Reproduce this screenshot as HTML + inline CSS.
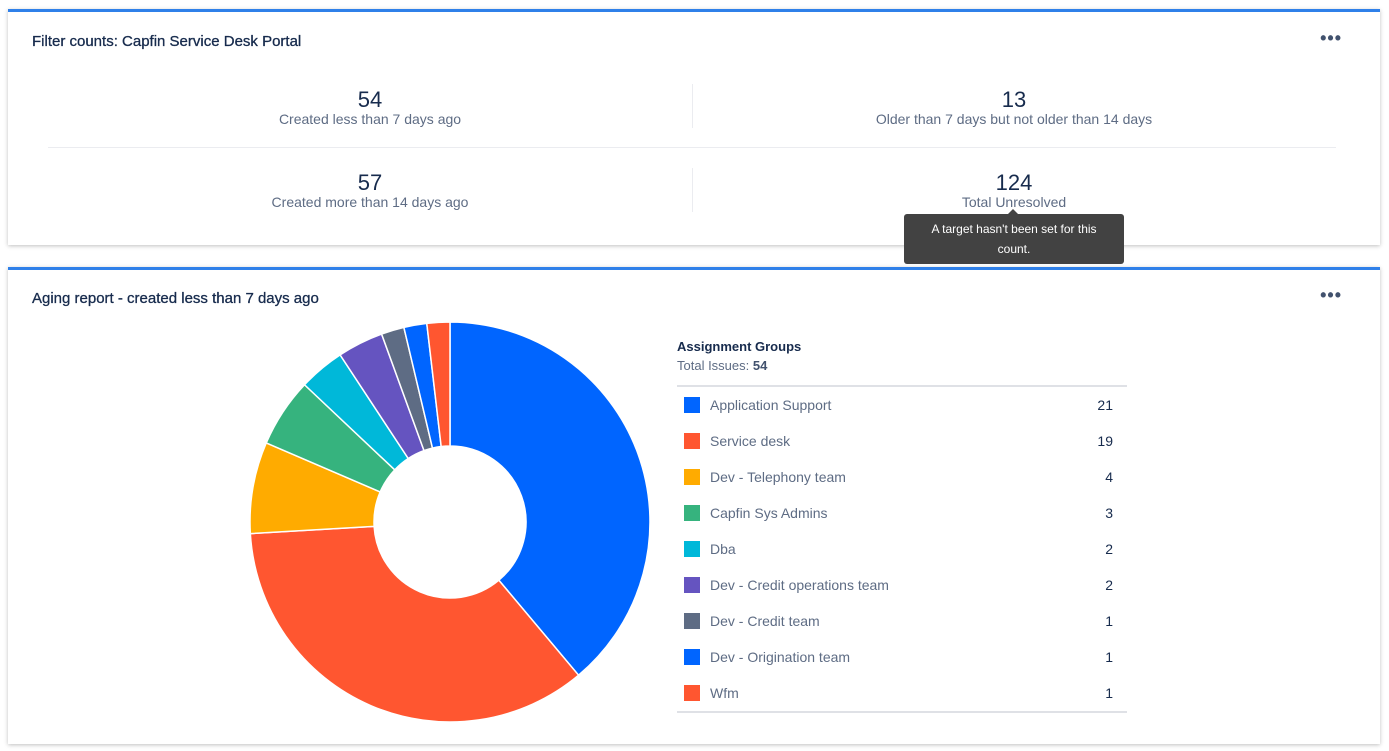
<!DOCTYPE html>
<html><head><meta charset="utf-8"><style>
body{margin:0;background:#fff;font-family:"Liberation Sans",Arial,sans-serif;width:1389px;height:751px;overflow:hidden;position:relative}
.card{position:absolute;left:8px;width:1372px;background:#fff;border-top:3px solid #2f80e9;box-shadow:0 1px 4px rgba(0,0,0,.25)}
.title{position:absolute;left:24px;font-size:15px;color:#172b4d;-webkit-text-stroke:0.3px #172b4d}
.dots{position:absolute;right:38px;font-size:18px;color:#42526e;font-weight:bold;letter-spacing:1px}
.stat{position:absolute;width:644px;text-align:center;color:#172b4d}
.stat .n{font-size:22px;line-height:22px}
.stat .l{font-size:14px;color:#5e6c84;line-height:16px}
.vl{position:absolute;left:684px;width:1px;background:#ebecf0}
.tip{position:absolute;left:904px;top:214px;width:220px;height:50px;background:#424242;color:#fff;border-radius:3px;font-size:12px;text-align:center;line-height:20px;padding-top:5px;box-sizing:border-box;z-index:2}
.tip:before{content:"";position:absolute;left:104px;top:-5px;border:5px solid transparent;border-top:0;border-bottom-color:#424242}
.row{position:absolute;left:677px;width:436px;height:36px;font-size:14px;color:#5e6c84}
.row i{position:absolute;left:7px;top:9px;width:16px;height:16px}
.row span{position:absolute;left:33px;top:9px}
.row b{position:absolute;right:0;top:9px;font-weight:normal;color:#172b4d}
</style></head><body>
<div class="card" style="top:9px;height:233px">
<div class="title" style="top:21px">Filter counts: Capfin Service Desk Portal</div>
<div class="dots" style="top:16px">•••</div>
<div class="stat" style="left:40px;top:77px"><div class="n">54</div><div class="l">Created less than 7 days ago</div></div>
<div class="stat" style="left:684px;top:77px"><div class="n">13</div><div class="l">Older than 7 days but not older than 14 days</div></div>
<div class="stat" style="left:40px;top:160px"><div class="n">57</div><div class="l">Created more than 14 days ago</div></div>
<div class="stat" style="left:684px;top:160px"><div class="n">124</div><div class="l">Total Unresolved</div></div>
<div class="vl" style="top:72px;height:44px"></div>
<div class="vl" style="top:156px;height:44px"></div>
<div style="position:absolute;left:40px;top:135px;width:1288px;height:1px;background:#ebecf0"></div>
</div>
<div class="tip">A target hasn't been set for this<br>count.</div>
<div class="card" style="top:267px;height:474px">
<div class="title" style="top:20px">Aging report - created less than 7 days ago</div>
<div class="dots" style="top:15px">•••</div>
</div>
<svg style="position:absolute;left:0;top:0" width="1389" height="751">
<g stroke="#fff" stroke-width="1.5" stroke-linejoin="round">
<path fill="#0065ff" d="M450,322 A200,200 0 0 1 578.56,675.2 L498.85,580.22 A76,76 0 0 0 450,446 Z"/>
<path fill="#ff5630" d="M578.56,675.2 A200,200 0 0 1 250.34,533.63 L374.13,526.42 A76,76 0 0 0 498.85,580.22 Z"/>
<path fill="#ffab00" d="M250.34,533.63 A200,200 0 0 1 266.29,442.89 L380.19,491.94 A76,76 0 0 0 374.13,526.42 Z"/>
<path fill="#36b37e" d="M266.29,442.89 A200,200 0 0 1 304.53,384.75 L394.72,469.85 A76,76 0 0 0 380.19,491.94 Z"/>
<path fill="#00b8d9" d="M304.53,384.75 A200,200 0 0 1 340.10,354.90 L408.24,458.50 A76,76 0 0 0 394.72,469.85 Z"/>
<path fill="#6554c0" d="M340.10,354.90 A200,200 0 0 1 381.60,334.06 L424.01,450.58 A76,76 0 0 0 408.24,458.50 Z"/>
<path fill="#5e6c84" d="M381.60,334.06 A200,200 0 0 1 403.88,327.39 L432.47,448.05 A76,76 0 0 0 424.01,450.58 Z"/>
<path fill="#0065ff" d="M403.88,327.39 A200,200 0 0 1 426.76,323.35 L441.17,446.51 A76,76 0 0 0 432.47,448.05 Z"/>
<path fill="#ff5630" d="M426.76,323.35 A200,200 0 0 1 450,322 L450,446 A76,76 0 0 0 441.17,446.51 Z"/>
</g>
</svg>
<div style="position:absolute;left:677px;top:339px;font-size:13px;color:#172b4d;font-weight:bold">Assignment Groups</div>
<div style="position:absolute;left:677px;top:358px;font-size:13px;color:#5e6c84">Total Issues: <b style="color:#42526e">54</b></div>
<div style="position:absolute;left:677px;top:385px;width:450px;height:2px;background:#dfe1e6"></div>
<div style="position:absolute;left:677px;top:711px;width:450px;height:2px;background:#dfe1e6"></div>
<div class="row" style="top:388px"><i style="background:#0065ff"></i><span>Application Support</span><b>21</b></div>
<div class="row" style="top:424px"><i style="background:#ff5630"></i><span>Service desk</span><b>19</b></div>
<div class="row" style="top:460px"><i style="background:#ffab00"></i><span>Dev - Telephony team</span><b>4</b></div>
<div class="row" style="top:496px"><i style="background:#36b37e"></i><span>Capfin Sys Admins</span><b>3</b></div>
<div class="row" style="top:532px"><i style="background:#00b8d9"></i><span>Dba</span><b>2</b></div>
<div class="row" style="top:568px"><i style="background:#6554c0"></i><span>Dev - Credit operations team</span><b>2</b></div>
<div class="row" style="top:604px"><i style="background:#5e6c84"></i><span>Dev - Credit team</span><b>1</b></div>
<div class="row" style="top:640px"><i style="background:#0065ff"></i><span>Dev - Origination team</span><b>1</b></div>
<div class="row" style="top:676px"><i style="background:#ff5630"></i><span>Wfm</span><b>1</b></div>
</body></html>
